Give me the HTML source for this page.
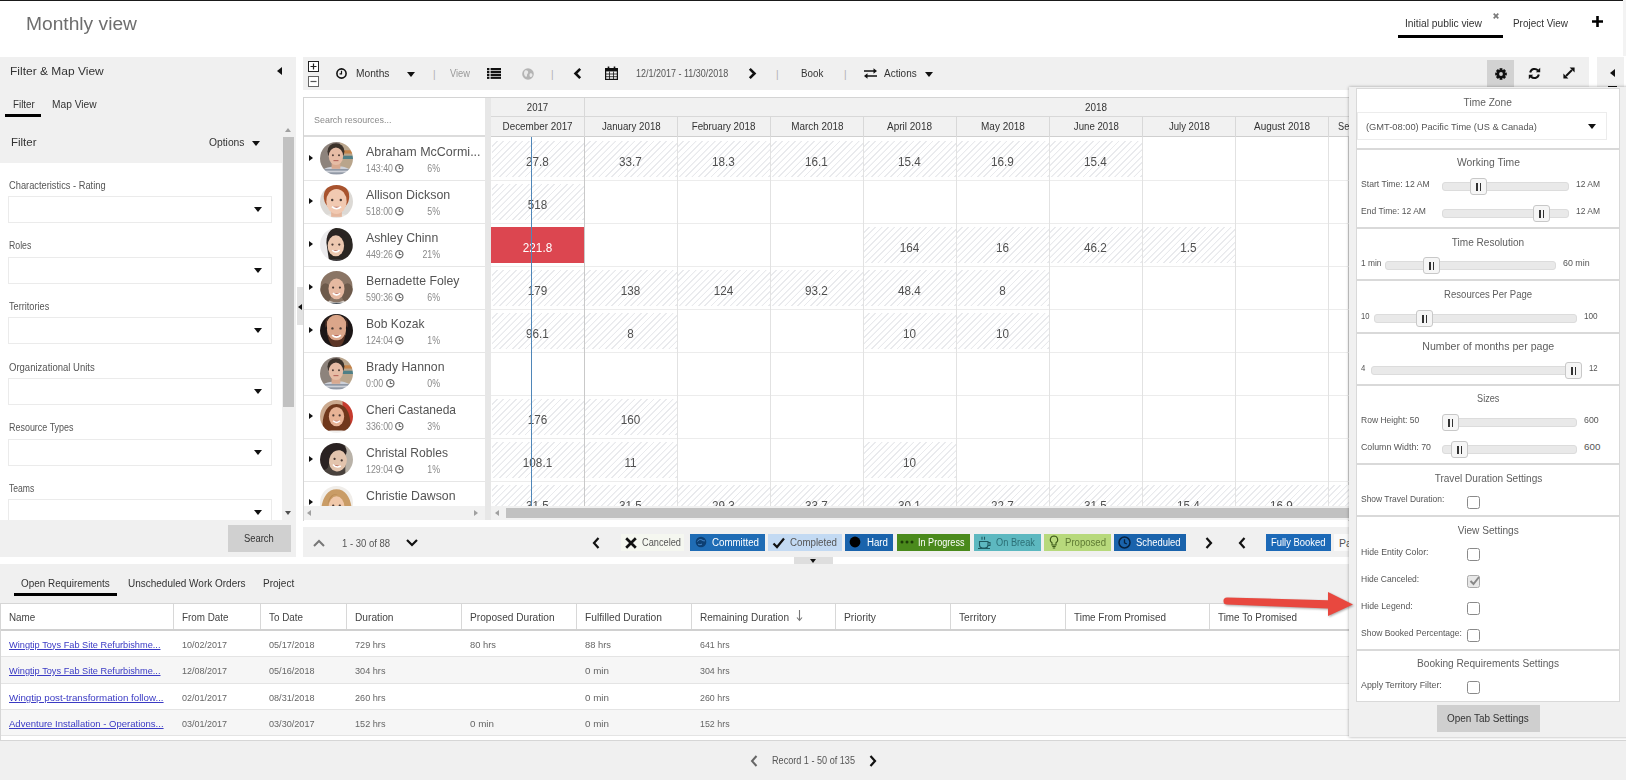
<!DOCTYPE html>
<html lang="en"><head><meta charset="utf-8"><title>Monthly view</title>
<style>
*{box-sizing:border-box;margin:0;padding:0}
html,body{width:1626px;height:780px;overflow:hidden;background:#fff}
body{font-family:"Liberation Sans",sans-serif;color:#444;position:relative;font-size:11px}
.a{position:absolute}
.t{position:absolute;white-space:nowrap;line-height:1}
svg{position:absolute;overflow:visible}
.g{background:#f0f0f0}
.dd{position:absolute;left:8px;width:264px;height:26px;background:#fff;border:1px solid #ebebeb}
.dd i{position:absolute;left:245px;top:10px;border:4.5px solid transparent;border-top:5px solid #111;border-bottom:0;width:0;height:0}
.lab{position:absolute;left:8.500px;font-size:10px;color:#555;white-space:nowrap;line-height:1}
.rn{position:absolute;left:365.500px;font-size:12.6px;color:#545454;white-space:nowrap;line-height:1}
.rs{position:absolute;font-size:10px;color:#8a8a8a;white-space:nowrap;line-height:1;transform:scaleX(.88);transform-origin:0 50%}
.av{position:absolute;left:320px;width:33px;height:33px;border-radius:50%;overflow:hidden}
.ex{position:absolute;left:308.9px;border:3.9px solid transparent;border-left:4.6px solid #111;border-right:0;width:0;height:0}
.hc{position:absolute;width:92px;height:36.5px;background:repeating-linear-gradient(135deg,#fff 0,#fff 3.1px,#e9eaed 3.3px,#e9eaed 4.3px,#fff 4.5px)}
.cv{position:absolute;width:93px;text-align:center;font-size:12.2px;transform:scaleX(.96);color:#505050;line-height:1;white-space:nowrap}
.mh{position:absolute;top:117px;height:20px;width:93px;text-align:center;font-size:10px;color:#333;line-height:19px;white-space:nowrap;border-left:1px solid #d8d8d8}
.lg{position:absolute;top:534px;height:17px;font-size:10.3px;line-height:17px;white-space:nowrap;color:#fff}
.th{position:absolute;top:604px;height:25px;line-height:27px;font-size:10.3px;color:#444;white-space:nowrap;border-left:1px solid #d8d8d8;padding-left:8px}
.td{position:absolute;font-size:9.8px;color:#666;white-space:nowrap;line-height:1}
.lk{color:#3a3ac4;text-decoration:underline}
.sec{position:absolute;left:1356px;width:264px;background:#fff;border:1px solid #d9d9d9}
.st{position:absolute;left:1356px;width:264px;text-align:center;font-size:10px;color:#5e5e5e;line-height:1;white-space:nowrap}
.sl{position:absolute;left:1361.5px;font-size:9.8px;color:#555;line-height:1;white-space:nowrap}
.tr{position:absolute;height:9px;background:#e9e9e9;border:1px solid #dcdcdc;border-radius:3px}
.tb{position:absolute;width:17px;height:17px;background:#f6f6f6;border:1px solid #c8c8c8;border-radius:3px}
.tb:before,.tb:after{content:"";position:absolute;top:4px;width:1.6px;height:8px;background:#333}
.tb:before{left:5.4px}.tb:after{left:8.6px}
.cb{position:absolute;left:1467px;width:13px;height:13px;background:#fff;border:1px solid #8a8a8a;border-radius:2.5px}
</style></head>
<body>
<div class="a" style="left:0;top:0;width:1623px;height:1px;background:#1a1a1a"></div>
<div class="a" style="left:1623px;top:0;width:3px;height:56px;background:#f3f3f3"></div>
<div class="t" id="title" style="display:inline-block;transform:scaleX(1.022);transform-origin:0 50%;left:26px;top:14.7px;font-size:18.8px;color:#6e6e6e">Monthly view</div>
<div class="t" id="tab1" style="display:inline-block;transform:scaleX(1.026);transform-origin:0 50%;left:1404.7px;top:18.8px;font-size:10px;color:#333">Initial public view</div>
<div class="a" style="left:1398px;top:35px;width:105px;height:3px;background:#000"></div>
<svg style="left:1493px;top:13px" width="6" height="6"><path d="M.7.7l4.600 4.600M5.300.7L.7 5.300" stroke="#7a7a7a" stroke-width="1.700"/></svg>
<div class="t" id="tab2" style="display:inline-block;transform:scaleX(0.993);transform-origin:0 50%;left:1513px;top:18.8px;font-size:10px;color:#333">Project View</div>
<svg style="left:1592px;top:16px" width="11" height="11"><path d="M5.5 0v11M0 5.5h11" stroke="#000" stroke-width="2.6" fill="none"/></svg>
<div class="a g" style="left:0;top:57px;width:296px;height:500px"></div>
<div class="t" id="fmv" style="display:inline-block;transform:scaleX(1.043);transform-origin:0 50%;left:10px;top:65.9px;font-size:11.5px;color:#333">Filter &amp; Map View</div>
<div class="a" style="left:277px;top:67px;border:4px solid transparent;border-right:5px solid #111;border-left:0"></div>
<div class="t" id="ftab" style="display:inline-block;transform:scaleX(0.978);transform-origin:0 50%;left:12.500px;top:99.8px;font-size:10px;color:#333">Filter</div>
<div class="a" style="left:5px;top:114px;width:36px;height:3px;background:#000"></div>
<div class="t" id="mtab" style="display:inline-block;transform:scaleX(1.018);transform-origin:0 50%;left:52px;top:99.8px;font-size:10px;color:#333">Map View</div>
<div class="t" id="fhd" style="display:inline-block;transform:scaleX(0.998);transform-origin:0 50%;left:10.500px;top:136.9px;font-size:11.5px;color:#333">Filter</div>
<div class="t" id="opt" style="display:inline-block;transform:scaleX(0.936);transform-origin:0 50%;left:209px;top:137.4px;font-size:11px;color:#333">Options</div>
<div class="a" style="left:252px;top:141px;border:4px solid transparent;border-top:5px solid #111;border-bottom:0"></div>
<div class="a" style="left:0;top:163px;width:282px;height:357px;background:#fff"></div>
<div class="a" style="left:282px;top:122px;width:13px;height:398px;background:#f0f0f0"></div>
<div class="a" style="left:282.6px;top:137px;width:11.2px;height:270px;background:#c1c1c1"></div>
<div class="a" style="left:285px;top:128px;border:3.5px solid transparent;border-bottom:4px solid #a0a0a0;border-top:0"></div>
<div class="a" style="left:285px;top:511px;border:3.5px solid transparent;border-top:4px solid #505050;border-bottom:0"></div>
<div class="lab" id="lab0" style="display:inline-block;transform:scaleX(0.929);transform-origin:0 50%;top:180.79999999999998px">Characteristics - Rating</div><div class="dd" style="top:196.2px;height:27px;"><i></i></div>
<div class="lab" id="lab1" style="display:inline-block;transform:scaleX(0.872);transform-origin:0 50%;top:241.4px">Roles</div><div class="dd" style="top:256.8px;height:27px;"><i></i></div>
<div class="lab" id="lab2" style="display:inline-block;transform:scaleX(0.916);transform-origin:0 50%;top:302.0px">Territories</div><div class="dd" style="top:317.4px;height:27px;"><i></i></div>
<div class="lab" id="lab3" style="display:inline-block;transform:scaleX(0.952);transform-origin:0 50%;top:362.6px">Organizational Units</div><div class="dd" style="top:378px;height:27px;"><i></i></div>
<div class="lab" id="lab4" style="display:inline-block;transform:scaleX(0.895);transform-origin:0 50%;top:423.20000000000005px">Resource Types</div><div class="dd" style="top:438.6px;height:27px;"><i></i></div>
<div class="lab" id="lab5" style="display:inline-block;transform:scaleX(0.859);transform-origin:0 50%;top:483.8px">Teams</div><div class="dd" style="top:499.2px;height:20.5px;border-bottom:0"><i></i></div>
<div class="a" style="left:228px;top:525px;width:63px;height:27px;background:#d0d0d0"></div>
<div class="t" id="srch" style="display:inline-block;transform:scaleX(0.94);transform-origin:0 50%;left:244px;top:534.4px;font-size:10px;color:#333">Search</div>
<div class="a" style="left:297px;top:287px;width:6px;height:38px;background:#e2e2e2"></div>
<div class="a" style="left:298px;top:304px;border:3.5px solid transparent;border-right:4px solid #111;border-left:0"></div>
<div class="a g" style="left:303px;top:57px;width:1286px;height:33px"></div>
<svg style="left:308px;top:61px" width="11" height="11"><rect x=".5" y=".5" width="10" height="10" fill="#fff" stroke="#222"/><path d="M5.5 2.5v6M2.5 5.5h6" stroke="#222" stroke-width="1.2"/></svg>
<svg style="left:308px;top:76px" width="11" height="11"><rect x=".5" y=".5" width="10" height="10" fill="#fff" stroke="#666"/><path d="M2.5 5.5h6" stroke="#555" stroke-width="1.2"/></svg>
<svg style="left:336px;top:68px" width="11" height="11"><circle cx="5.5" cy="5.5" r="4.6" fill="none" stroke="#111" stroke-width="1.6"/><path d="M5.5 2.8v3H3.6" stroke="#111" stroke-width="1.2" fill="none"/></svg>
<div class="t" id="months" style="display:inline-block;transform:scaleX(1.002);transform-origin:0 50%;left:355.500px;top:69.3px;font-size:10.2px;color:#333">Months</div>
<div class="a" style="left:407px;top:72px;border:4px solid transparent;border-top:5px solid #111;border-bottom:0"></div>
<div class="t" style="left:433px;top:70px;font-size:10px;color:#b0b0b0">|</div>
<div class="t" id="view" style="display:inline-block;transform:scaleX(0.913);transform-origin:0 50%;left:450px;top:69.3px;font-size:10.2px;color:#999">View</div>
<svg style="left:487px;top:68px" width="14" height="11"><g fill="#111"><rect x="0" y="0" width="2.4" height="2.2"/><rect x="3.6" y="0" width="10.4" height="2.2"/><rect x="0" y="2.9" width="2.4" height="2.2"/><rect x="3.6" y="2.9" width="10.4" height="2.2"/><rect x="0" y="5.8" width="2.4" height="2.2"/><rect x="3.6" y="5.8" width="10.4" height="2.2"/><rect x="0" y="8.7" width="2.4" height="2.2"/><rect x="3.6" y="8.7" width="10.4" height="2.2"/></g></svg>
<svg style="left:522px;top:68px" width="12" height="12"><circle cx="6" cy="6" r="5.8" fill="#b4b4b4"/><path d="M3 2.5c1.5-.8 3 0 3.2 1.5.2 1.6-1.5 2-1.2 3.5.2 1-.8 1.6-1.6 1C2 7.500 1.400 4 3 2.500zM8 5.500c1-.5 2.500.2 2.500 1.500S9 9.500 8.200 9c-.8-.6-1-2.800-.2-3.500z" fill="#e9e9e9"/></svg>
<div class="t" style="left:551px;top:70px;font-size:10px;color:#b0b0b0">|</div>
<svg style="left:573px;top:67px" width="9" height="13"><path d="M7.2 1.800L2.500 6.500l4.700 4.700" stroke="#111" stroke-width="2.600" fill="none"/></svg>
<svg style="left:605px;top:66px" width="13" height="14"><rect x=".6" y="2.600" width="11.800" height="10.800" fill="none" stroke="#111" stroke-width="1.200"/><rect x=".6" y="2.600" width="11.800" height="2.800" fill="#111"/><path d="M3.500 .5v3.500M9.500 .5v3.500" stroke="#111" stroke-width="1.600"/><path d="M4.500 5.500v8M8.500 5.500v8M.6 8h11.800M.6 10.700h11.800" stroke="#111" stroke-width=".8"/></svg>
<div class="t" id="range" style="display:inline-block;transform:scaleX(0.882);transform-origin:0 50%;left:635.700px;top:69.3px;font-size:10.2px;color:#555">12/1/2017 - 11/30/2018</div>
<svg style="left:748px;top:67px" width="9" height="13"><path d="M1.800 1.800l4.700 4.700-4.700 4.700" stroke="#111" stroke-width="2.600" fill="none"/></svg>
<div class="t" style="left:776px;top:70px;font-size:10px;color:#b0b0b0">|</div>
<div class="t" id="book" style="display:inline-block;transform:scaleX(0.96);transform-origin:0 50%;left:800.700px;top:69.3px;font-size:10.2px;color:#333">Book</div>
<div class="t" style="left:844px;top:70px;font-size:10px;color:#b0b0b0">|</div>
<svg style="left:864px;top:68px" width="13" height="11"><path d="M0 3h11M13 8H2" stroke="#111" stroke-width="1.500" fill="none"/><path d="M9.500 .3l3.500 2.700-3.500 2.700zM3.500 5.300L0 8l3.500 2.700z" fill="#111"/></svg>
<div class="t" id="actions" style="display:inline-block;transform:scaleX(0.978);transform-origin:0 50%;left:884px;top:69.3px;font-size:10.2px;color:#333">Actions</div>
<div class="a" style="left:925px;top:72px;border:4px solid transparent;border-top:5px solid #111;border-bottom:0"></div>
<div class="a" style="left:1487px;top:60px;width:27px;height:30px;background:#d2d2d2"></div>
<svg style="left:1495px;top:68px" width="12" height="12" viewBox="-6 -6 12 12"><g fill="#111"><rect x="-1.400" y="-5.800" width="2.800" height="3" transform="rotate(0)"/><rect x="-1.400" y="-5.800" width="2.800" height="3" transform="rotate(45)"/><rect x="-1.400" y="-5.800" width="2.800" height="3" transform="rotate(90)"/><rect x="-1.400" y="-5.800" width="2.800" height="3" transform="rotate(135)"/><rect x="-1.400" y="-5.800" width="2.800" height="3" transform="rotate(180)"/><rect x="-1.400" y="-5.800" width="2.800" height="3" transform="rotate(225)"/><rect x="-1.400" y="-5.800" width="2.800" height="3" transform="rotate(270)"/><rect x="-1.400" y="-5.800" width="2.800" height="3" transform="rotate(315)"/><circle r="4.300"/></g><circle r="1.900" fill="#d2d2d2"/></svg>
<svg style="left:1528px;top:67px" width="13" height="13" viewBox="0 0 13 13"><path d="M2.200 5.500A4.500 4.500 0 0 1 10 3.500M10.800 7.500A4.500 4.500 0 0 1 3 9.500" stroke="#111" stroke-width="2" fill="none"/><path d="M12.200 .8v4.400H7.800zM.8 12.200V7.800h4.400z" fill="#111"/></svg>
<svg style="left:1563px;top:67px" width="12" height="12" viewBox="0 0 12 12"><path d="M3 9l6-6" stroke="#111" stroke-width="2"/><path d="M11.600 .4v5L6.600 .4zM.4 11.600v-5l5 5z" fill="#111"/></svg>
<div class="a g" style="left:1597px;top:57px;width:27px;height:33px"></div>
<div class="a" style="left:1610px;top:69px;border:4.500px solid transparent;border-right:5px solid #111;border-left:0"></div>
<div class="a" style="left:1608px;top:86px;width:9px;height:2px;background:#111"></div>
<div class="a" style="left:303px;top:97px;width:1046px;height:424px;border:1px solid #d4d4d4;border-bottom:0;background:#fff"></div>
<div class="t" id="sres" style="display:inline-block;transform:scaleX(0.912);transform-origin:0 50%;left:313.500px;top:114.6px;font-size:9.8px;color:#8a8a8a">Search resources...</div>
<div class="a" style="left:304px;top:135px;width:181px;height:2px;background:#dcdcdc"></div>
<div class="a" style="left:485px;top:98px;width:6px;height:422px;background:#e7e7e7"></div>
<div class="a" style="left:491px;top:98px;width:858px;height:39px;background:#f1f1f1;border-bottom:1px solid #cfcfcf"></div>
<div class="a" style="left:491px;top:116px;width:858px;height:1px;background:#d8d8d8"></div>
<div class="a" style="left:584px;top:98px;width:1px;height:19px;background:#d8d8d8"></div>
<div class="t" id="y17" style="display:inline-block;transform:scaleX(0.966);transform-origin:50% 50%;left:491px;width:93px;text-align:center;top:102.7px;font-size:10px;color:#333">2017</div>
<div class="t" id="y18" style="display:inline-block;transform:scaleX(0.989);transform-origin:0 50%;left:1085px;top:102.7px;font-size:10px;color:#333">2018</div>
<div class="mh" style="left:491px;border-left:0;"><span id="m0" style="display:inline-block;transform:scaleX(0.984);transform-origin:50% 50%">December 2017</span></div><div class="mh" style="left:584px;"><span id="m1" style="display:inline-block;transform:scaleX(0.969);transform-origin:50% 50%">January 2018</span></div><div class="mh" style="left:677px;"><span id="m2" style="display:inline-block;transform:scaleX(0.979);transform-origin:50% 50%">February 2018</span></div><div class="mh" style="left:770px;"><span id="m3" style="display:inline-block;transform:scaleX(0.99);transform-origin:50% 50%">March 2018</span></div><div class="mh" style="left:863px;"><span id="m4" style="display:inline-block;transform:scaleX(0.999);transform-origin:50% 50%">April 2018</span></div><div class="mh" style="left:956px;"><span id="m5" style="display:inline-block;transform:scaleX(0.999);transform-origin:50% 50%">May 2018</span></div><div class="mh" style="left:1049px;"><span id="m6" style="display:inline-block;transform:scaleX(0.963);transform-origin:50% 50%">June 2018</span></div><div class="mh" style="left:1142px;"><span id="m7" style="display:inline-block;transform:scaleX(0.958);transform-origin:50% 50%">July 2018</span></div><div class="mh" style="left:1235px;"><span id="m8" style="display:inline-block;transform:scaleX(0.997);transform-origin:50% 50%">August 2018</span></div><div class="mh" style="left:1328px;width:30px;overflow:hidden;text-align:left;padding-left:9px"><span style="display:inline-block;transform:scaleX(.92);transform-origin:0 50%">September 2018</span></div>
<svg width="0" height="0" style="left:0;top:0"><defs><filter id="bl" x="-10%" y="-10%" width="120%" height="120%"><feGaussianBlur stdDeviation="0.55"/></filter></defs></svg>
<div class="a" style="left:0;top:0;width:1349px;height:506px;overflow:hidden">
<div class="a" style="left:304px;top:180px;width:181px;height:1px;background:#e6e6e6"></div><div class="a" style="left:491px;top:180px;width:858px;height:1px;background:#ececec"></div><div class="ex" style="top:155px"></div><div class="av" style="top:141.5px"><svg style="left:0;top:0" width="33" height="33" viewBox="0 0 34 34"><g filter="url(#bl)"><g transform="translate(17 17.5) scale(1.12) translate(-17 -17)"><rect width="34" height="34" fill="#8d837c"/><rect x="20" width="14" height="34" fill="#b9a58c"/><rect x="21" y="9" width="13" height="3" fill="#c4834a"/><rect x="21" y="14" width="13" height="3" fill="#4f7f86"/><path d="M1 34c1-7 5-9 13-10l8 0c6 1 10 4 11 10z" fill="#cdd0d8"/><path d="M3 30h28M5 27h24" stroke="#7d8594" stroke-width="1"/><rect x="12.500" y="19" width="8" height="7" fill="#d9a98f"/><ellipse cx="16.500" cy="10" rx="7.800" ry="7.500" fill="#3b302c"/><ellipse cx="16.5" cy="14.5" rx="6.6" ry="8" fill="#e6bca5"/><circle cx="13.7" cy="13.5" r="0.9" fill="#4a3a34"/><circle cx="19.3" cy="13.5" r="0.9" fill="#4a3a34"/><path d="M14.2 18.5h4.6" stroke="#b5655a" stroke-width="1"/></g></g></svg></div><div class="rn" id="rn0" style="display:inline-block;transform:scaleX(0.992);transform-origin:0 50%;top:146px">Abraham McCormi...</div><div class="rs" id="rh0" style="left:365.5px;top:164.2px">143:40</div><svg style="left:394.6px;top:163.5px" width="8.600" height="8.600" viewBox="0 0 8 8"><circle cx="4" cy="4" r="3.400" fill="none" stroke="#6a6a6a" stroke-width="1.100"/><path d="M4 1.800V4.200H6" stroke="#6a6a6a" stroke-width="1" fill="none"/></svg><div class="rs" id="rp0" style="left:400px;width:40px;text-align:right;transform-origin:100% 50%;top:164.2px">6%</div>
<div class="hc" style="left:492px;top:140.5px"></div><div class="cv" style="left:491px;top:155.5px">27.8</div><div class="hc" style="left:585px;top:140.5px"></div><div class="cv" style="left:584px;top:155.5px">33.7</div><div class="hc" style="left:678px;top:140.5px"></div><div class="cv" style="left:677px;top:155.5px">18.3</div><div class="hc" style="left:771px;top:140.5px"></div><div class="cv" style="left:770px;top:155.5px">16.1</div><div class="hc" style="left:864px;top:140.5px"></div><div class="cv" style="left:863px;top:155.5px">15.4</div><div class="hc" style="left:957px;top:140.5px"></div><div class="cv" style="left:956px;top:155.5px">16.9</div><div class="hc" style="left:1050px;top:140.5px"></div><div class="cv" style="left:1049px;top:155.5px">15.4</div>
<div class="a" style="left:304px;top:223px;width:181px;height:1px;background:#e6e6e6"></div><div class="a" style="left:491px;top:223px;width:858px;height:1px;background:#ececec"></div><div class="ex" style="top:198px"></div><div class="av" style="top:184.5px"><svg style="left:0;top:0" width="33" height="33" viewBox="0 0 34 34"><g filter="url(#bl)"><g transform="translate(17 19) scale(1.38) translate(-17 -17)"><rect width="34" height="34" fill="#dcd9d5"/><path d="M0 34c2-6 6-8 12-9h10c6 1 10 3 12 9z" fill="#e9e6e2"/><rect x="13" y="22" width="8" height="5" fill="#e5b79d"/><ellipse cx="17" cy="12" rx="9.500" ry="10" fill="#a8532d"/><ellipse cx="17" cy="15.5" rx="7.6" ry="9.3" fill="#f1c9b1"/><circle cx="13.8" cy="14.4" r="0.9" fill="#4a3a34"/><circle cx="20.2" cy="14.4" r="0.9" fill="#4a3a34"/><path d="M13.6 19.4q3.4 3.0 6.8 0" stroke="#fff" stroke-width="1.300" fill="#b5655a"/></g></g></svg></div><div class="rn" id="rn1" style="display:inline-block;transform:scaleX(0.987);transform-origin:0 50%;top:189px">Allison Dickson</div><div class="rs" id="rh1" style="left:365.5px;top:207.2px">518:00</div><svg style="left:394.6px;top:206.5px" width="8.600" height="8.600" viewBox="0 0 8 8"><circle cx="4" cy="4" r="3.400" fill="none" stroke="#6a6a6a" stroke-width="1.100"/><path d="M4 1.800V4.200H6" stroke="#6a6a6a" stroke-width="1" fill="none"/></svg><div class="rs" id="rp1" style="left:400px;width:40px;text-align:right;transform-origin:100% 50%;top:207.2px">5%</div>
<div class="hc" style="left:492px;top:183.5px"></div><div class="cv" style="left:491px;top:198.5px">518</div>
<div class="a" style="left:304px;top:266px;width:181px;height:1px;background:#e6e6e6"></div><div class="a" style="left:491px;top:266px;width:858px;height:1px;background:#ececec"></div><div class="ex" style="top:241px"></div><div class="av" style="top:227.5px"><svg style="left:0;top:0" width="33" height="33" viewBox="0 0 34 34"><g filter="url(#bl)"><g transform="translate(17 19) scale(1.3) translate(-17 -17)"><rect width="34" height="34" fill="#ecebed"/><path d="M9 14c0-9 5-12 10-12 8 0 11 7 11 16l1 16H20l-9-6z" fill="#2c2523"/><path d="M4 34c2-5 6-7 11-7h6l6 7z" fill="#3d3a3c"/><ellipse cx="16.5" cy="16.5" rx="6.5" ry="8.3" fill="#ecc8b0"/><circle cx="13.8" cy="15.5" r="0.9" fill="#4a3a34"/><circle cx="19.2" cy="15.5" r="0.9" fill="#4a3a34"/><path d="M13.6 20.0q2.9 2.7 5.9 0" stroke="#fff" stroke-width="1.300" fill="#b5655a"/><path d="M9.500 13c2-6 8-7 14-4-3-5-12-6-14 4z" fill="#2c2523"/></g></g></svg></div><div class="rn" id="rn2" style="display:inline-block;transform:scaleX(0.973);transform-origin:0 50%;top:232px">Ashley Chinn</div><div class="rs" id="rh2" style="left:365.5px;top:250.2px">449:26</div><svg style="left:394.6px;top:249.5px" width="8.600" height="8.600" viewBox="0 0 8 8"><circle cx="4" cy="4" r="3.400" fill="none" stroke="#6a6a6a" stroke-width="1.100"/><path d="M4 1.800V4.200H6" stroke="#6a6a6a" stroke-width="1" fill="none"/></svg><div class="rs" id="rp2" style="left:400px;width:40px;text-align:right;transform-origin:100% 50%;top:250.2px">21%</div>
<div class="a" style="left:491px;top:227px;width:93px;height:36px;background:#dc4650"></div><div class="cv" style="left:491px;top:241.5px;color:#fff">221.8</div><div class="hc" style="left:864px;top:226.5px"></div><div class="cv" style="left:863px;top:241.5px">164</div><div class="hc" style="left:957px;top:226.5px"></div><div class="cv" style="left:956px;top:241.5px">16</div><div class="hc" style="left:1050px;top:226.5px"></div><div class="cv" style="left:1049px;top:241.5px">46.2</div><div class="hc" style="left:1143px;top:226.5px"></div><div class="cv" style="left:1142px;top:241.5px">1.5</div>
<div class="a" style="left:304px;top:309px;width:181px;height:1px;background:#e6e6e6"></div><div class="a" style="left:491px;top:309px;width:858px;height:1px;background:#ececec"></div><div class="ex" style="top:284px"></div><div class="av" style="top:270.5px"><svg style="left:0;top:0" width="33" height="33" viewBox="0 0 34 34"><g filter="url(#bl)"><g transform="translate(17 19) scale(1.25) translate(-17 -17)"><rect width="34" height="34" fill="#d3cdc6"/><ellipse cx="17" cy="14" rx="13" ry="13.500" fill="#8a7565"/><ellipse cx="8" cy="20" rx="5" ry="8" fill="#6d5a4c"/><ellipse cx="26" cy="20" rx="5" ry="8" fill="#6d5a4c"/><path d="M2 34c2-5 7-6 11-6h8c5 0 9 2 11 6z" fill="#48525c"/><ellipse cx="17" cy="16.5" rx="6.6" ry="8.5" fill="#e6b9a1"/><circle cx="14.2" cy="15.5" r="0.9" fill="#4a3a34"/><circle cx="19.8" cy="15.5" r="0.9" fill="#4a3a34"/><path d="M14.0 20.1q3.0 2.7 5.9 0" stroke="#fff" stroke-width="1.300" fill="#b5655a"/></g></g></svg></div><div class="rn" id="rn3" style="display:inline-block;transform:scaleX(0.975);transform-origin:0 50%;top:275px">Bernadette Foley</div><div class="rs" id="rh3" style="left:365.5px;top:293.2px">590:36</div><svg style="left:394.6px;top:292.5px" width="8.600" height="8.600" viewBox="0 0 8 8"><circle cx="4" cy="4" r="3.400" fill="none" stroke="#6a6a6a" stroke-width="1.100"/><path d="M4 1.800V4.200H6" stroke="#6a6a6a" stroke-width="1" fill="none"/></svg><div class="rs" id="rp3" style="left:400px;width:40px;text-align:right;transform-origin:100% 50%;top:293.2px">6%</div>
<div class="hc" style="left:492px;top:269.5px"></div><div class="cv" style="left:491px;top:284.5px">179</div><div class="hc" style="left:585px;top:269.5px"></div><div class="cv" style="left:584px;top:284.5px">138</div><div class="hc" style="left:678px;top:269.5px"></div><div class="cv" style="left:677px;top:284.5px">124</div><div class="hc" style="left:771px;top:269.5px"></div><div class="cv" style="left:770px;top:284.5px">93.2</div><div class="hc" style="left:864px;top:269.5px"></div><div class="cv" style="left:863px;top:284.5px">48.4</div><div class="hc" style="left:957px;top:269.5px"></div><div class="cv" style="left:956px;top:284.5px">8</div>
<div class="a" style="left:304px;top:352px;width:181px;height:1px;background:#e6e6e6"></div><div class="a" style="left:491px;top:352px;width:858px;height:1px;background:#ececec"></div><div class="ex" style="top:327px"></div><div class="av" style="top:313.5px"><svg style="left:0;top:0" width="33" height="33" viewBox="0 0 34 34"><g filter="url(#bl)"><g transform="translate(17 19) scale(1.35) translate(-17 -17)"><rect width="34" height="34" fill="#1d1918"/><path d="M0 34c2-5 6-7 11-7h12c5 0 9 2 11 7z" fill="#262222"/><ellipse cx="17" cy="11" rx="7.600" ry="7.500" fill="#d9a487"/><path d="M9.500 12c0-3 .5-5 1.500-6.500-2 1-3 4-2.500 8zM24.500 12c0-3-.5-5-1.500-6.500 2 1 3 4 2.500 8z" fill="#4a2e24"/><ellipse cx="17" cy="15" rx="7.3" ry="9.5" fill="#dba68a"/><circle cx="13.9" cy="13.9" r="0.9" fill="#4a3a34"/><circle cx="20.1" cy="13.9" r="0.9" fill="#4a3a34"/><path d="M13.7 19.0q3.3 3.0 6.6 0" stroke="#fff" stroke-width="1.300" fill="#b5655a"/><path d="M10 17c1 9 4 11 7 11s6-2 7-11c-2 5-4 6-7 6s-5-1-7-6z" fill="#5b3525"/></g></g></svg></div><div class="rn" id="rn4" style="display:inline-block;transform:scaleX(0.96);transform-origin:0 50%;top:318px">Bob Kozak</div><div class="rs" id="rh4" style="left:365.5px;top:336.2px">124:04</div><svg style="left:394.6px;top:335.5px" width="8.600" height="8.600" viewBox="0 0 8 8"><circle cx="4" cy="4" r="3.400" fill="none" stroke="#6a6a6a" stroke-width="1.100"/><path d="M4 1.800V4.200H6" stroke="#6a6a6a" stroke-width="1" fill="none"/></svg><div class="rs" id="rp4" style="left:400px;width:40px;text-align:right;transform-origin:100% 50%;top:336.2px">1%</div>
<div class="hc" style="left:492px;top:312.5px"></div><div class="cv" style="left:491px;top:327.5px">96.1</div><div class="hc" style="left:585px;top:312.5px"></div><div class="cv" style="left:584px;top:327.5px">8</div><div class="hc" style="left:864px;top:312.5px"></div><div class="cv" style="left:863px;top:327.5px">10</div><div class="hc" style="left:957px;top:312.5px"></div><div class="cv" style="left:956px;top:327.5px">10</div>
<div class="a" style="left:304px;top:395px;width:181px;height:1px;background:#e6e6e6"></div><div class="a" style="left:491px;top:395px;width:858px;height:1px;background:#ececec"></div><div class="av" style="top:356.5px"><svg style="left:0;top:0" width="33" height="33" viewBox="0 0 34 34"><g filter="url(#bl)"><g transform="translate(17 17.5) scale(1.12) translate(-17 -17)"><rect width="34" height="34" fill="#8d837c"/><rect x="20" width="14" height="34" fill="#b9a58c"/><rect x="21" y="9" width="13" height="3" fill="#c4834a"/><rect x="21" y="14" width="13" height="3" fill="#4f7f86"/><path d="M1 34c1-7 5-9 13-10l8 0c6 1 10 4 11 10z" fill="#cdd0d8"/><path d="M3 30h28M5 27h24" stroke="#7d8594" stroke-width="1"/><rect x="12.500" y="19" width="8" height="7" fill="#d9a98f"/><ellipse cx="16.500" cy="10" rx="7.800" ry="7.500" fill="#3b302c"/><ellipse cx="16.5" cy="14.5" rx="6.6" ry="8" fill="#e6bca5"/><circle cx="13.7" cy="13.5" r="0.9" fill="#4a3a34"/><circle cx="19.3" cy="13.5" r="0.9" fill="#4a3a34"/><path d="M14.2 18.5h4.6" stroke="#b5655a" stroke-width="1"/></g></g></svg></div><div class="rn" id="rn5" style="display:inline-block;transform:scaleX(0.975);transform-origin:0 50%;top:361px">Brady Hannon</div><div class="rs" id="rh5" style="left:365.5px;top:379.2px">0:00</div><svg style="left:386.3px;top:378.5px" width="8.600" height="8.600" viewBox="0 0 8 8"><circle cx="4" cy="4" r="3.400" fill="none" stroke="#6a6a6a" stroke-width="1.100"/><path d="M4 1.800V4.200H6" stroke="#6a6a6a" stroke-width="1" fill="none"/></svg><div class="rs" id="rp5" style="left:400px;width:40px;text-align:right;transform-origin:100% 50%;top:379.2px">0%</div>

<div class="a" style="left:304px;top:438px;width:181px;height:1px;background:#e6e6e6"></div><div class="a" style="left:491px;top:438px;width:858px;height:1px;background:#ececec"></div><div class="ex" style="top:413px"></div><div class="av" style="top:399.5px"><svg style="left:0;top:0" width="33" height="33" viewBox="0 0 34 34"><g filter="url(#bl)"><g transform="translate(17 19) scale(1.25) translate(-17 -17)"><rect width="34" height="34" fill="#cba98e"/><rect x="22" width="12" height="34" fill="#c63a2e"/><path d="M6 30c-2-14 2-25 11-25s13 10 11 25z" fill="#70381f"/><path d="M3 34c2-5 6-7 10-7h8c5 0 9 2 10 7z" fill="#f2f0ee"/><ellipse cx="17" cy="15.5" rx="6.3" ry="8" fill="#e8b395"/><circle cx="14.4" cy="14.5" r="0.9" fill="#4a3a34"/><circle cx="19.6" cy="14.5" r="0.9" fill="#4a3a34"/><path d="M14.2 18.9q2.8 2.6 5.7 0" stroke="#fff" stroke-width="1.300" fill="#b5655a"/></g></g></svg></div><div class="rn" id="rn6" style="display:inline-block;transform:scaleX(0.952);transform-origin:0 50%;top:404px">Cheri Castaneda</div><div class="rs" id="rh6" style="left:365.5px;top:422.2px">336:00</div><svg style="left:394.6px;top:421.5px" width="8.600" height="8.600" viewBox="0 0 8 8"><circle cx="4" cy="4" r="3.400" fill="none" stroke="#6a6a6a" stroke-width="1.100"/><path d="M4 1.800V4.200H6" stroke="#6a6a6a" stroke-width="1" fill="none"/></svg><div class="rs" id="rp6" style="left:400px;width:40px;text-align:right;transform-origin:100% 50%;top:422.2px">3%</div>
<div class="hc" style="left:492px;top:398.5px"></div><div class="cv" style="left:491px;top:413.5px">176</div><div class="hc" style="left:585px;top:398.5px"></div><div class="cv" style="left:584px;top:413.5px">160</div>
<div class="a" style="left:304px;top:481px;width:181px;height:1px;background:#e6e6e6"></div><div class="a" style="left:491px;top:481px;width:858px;height:1px;background:#ececec"></div><div class="ex" style="top:456px"></div><div class="av" style="top:442.5px"><svg style="left:0;top:0" width="33" height="33" viewBox="0 0 34 34"><g filter="url(#bl)"><g transform="translate(17 19) scale(1.3) translate(-17 -17)"><rect width="34" height="34" fill="#4a433d"/><rect x="24" width="10" height="34" fill="#b9b2a8"/><ellipse cx="15" cy="9" rx="10" ry="7.500" fill="#2a2320"/><ellipse cx="7" cy="16" rx="4.500" ry="8" fill="#2a2320"/><path d="M4 34c2-5 6-6 10-6h8c5 0 8 2 9 6z" fill="#8b8784"/><g transform="rotate(12 18 17)"><ellipse cx="18" cy="16.5" rx="7" ry="8.5" fill="#e3c4ad"/><circle cx="15.1" cy="15.5" r="0.9" fill="#4a3a34"/><circle cx="20.9" cy="15.5" r="0.9" fill="#4a3a34"/><path d="M14.8 20.1q3.1 2.7 6.3 0" stroke="#fff" stroke-width="1.300" fill="#b5655a"/></g></g></g></svg></div><div class="rn" id="rn7" style="display:inline-block;transform:scaleX(0.96);transform-origin:0 50%;top:447px">Christal Robles</div><div class="rs" id="rh7" style="left:365.5px;top:465.2px">129:04</div><svg style="left:394.6px;top:464.5px" width="8.600" height="8.600" viewBox="0 0 8 8"><circle cx="4" cy="4" r="3.400" fill="none" stroke="#6a6a6a" stroke-width="1.100"/><path d="M4 1.800V4.200H6" stroke="#6a6a6a" stroke-width="1" fill="none"/></svg><div class="rs" id="rp7" style="left:400px;width:40px;text-align:right;transform-origin:100% 50%;top:465.2px">1%</div>
<div class="hc" style="left:492px;top:441.5px"></div><div class="cv" style="left:491px;top:456.5px">108.1</div><div class="hc" style="left:585px;top:441.5px"></div><div class="cv" style="left:584px;top:456.5px">11</div><div class="hc" style="left:864px;top:441.5px"></div><div class="cv" style="left:863px;top:456.5px">10</div>
<div class="a" style="left:304px;top:524px;width:181px;height:1px;background:#e6e6e6"></div><div class="a" style="left:491px;top:524px;width:858px;height:1px;background:#ececec"></div><div class="ex" style="top:499px"></div><div class="av" style="top:485.5px"><svg style="left:0;top:0" width="33" height="33" viewBox="0 0 34 34"><g filter="url(#bl)"><g transform="translate(17 19) scale(1.3) translate(-17 -17)"><rect width="34" height="34" fill="#f0ede9"/><path d="M5 34C3 18 7 5 17 5s14 13 12 29z" fill="#c99c66"/><ellipse cx="17" cy="19" rx="6.3" ry="8.5" fill="#f0c8aa"/><circle cx="14.4" cy="18.0" r="0.9" fill="#4a3a34"/><circle cx="19.6" cy="18.0" r="0.9" fill="#4a3a34"/><path d="M14.2 22.6q2.8 2.7 5.7 0" stroke="#fff" stroke-width="1.300" fill="#b5655a"/><path d="M10 17c1-6 4-9 8-8-5 0-6 4-8 8z" fill="#b98a55"/></g></g></svg></div><div class="rn" id="rn8" style="display:inline-block;transform:scaleX(0.976);transform-origin:0 50%;top:490px">Christie Dawson</div>
<div class="hc" style="left:492px;top:484.5px"></div><div class="cv" style="left:491px;top:499.5px">31.5</div><div class="hc" style="left:585px;top:484.5px"></div><div class="cv" style="left:584px;top:499.5px">31.5</div><div class="hc" style="left:678px;top:484.5px"></div><div class="cv" style="left:677px;top:499.5px">29.3</div><div class="hc" style="left:771px;top:484.5px"></div><div class="cv" style="left:770px;top:499.5px">33.7</div><div class="hc" style="left:864px;top:484.5px"></div><div class="cv" style="left:863px;top:499.5px">30.1</div><div class="hc" style="left:957px;top:484.5px"></div><div class="cv" style="left:956px;top:499.5px">22.7</div><div class="hc" style="left:1050px;top:484.5px"></div><div class="cv" style="left:1049px;top:499.5px">31.5</div><div class="hc" style="left:1143px;top:484.5px"></div><div class="cv" style="left:1142px;top:499.5px">15.4</div><div class="hc" style="left:1236px;top:484.5px"></div><div class="cv" style="left:1235px;top:499.5px">16.9</div><div class="hc" style="left:1329px;top:484.5px"></div><div class="cv" style="left:1328px;top:499.5px">8</div>
<div class="a" style="left:584px;top:137px;width:1px;height:371px;background:#c9c9c9"></div><div class="a" style="left:677px;top:137px;width:1px;height:371px;background:#e2e2e2"></div><div class="a" style="left:770px;top:137px;width:1px;height:371px;background:#e2e2e2"></div><div class="a" style="left:863px;top:137px;width:1px;height:371px;background:#e2e2e2"></div><div class="a" style="left:956px;top:137px;width:1px;height:371px;background:#e2e2e2"></div><div class="a" style="left:1049px;top:137px;width:1px;height:371px;background:#e2e2e2"></div><div class="a" style="left:1142px;top:137px;width:1px;height:371px;background:#e2e2e2"></div><div class="a" style="left:1235px;top:137px;width:1px;height:371px;background:#e2e2e2"></div><div class="a" style="left:1328px;top:137px;width:1px;height:371px;background:#e2e2e2"></div><div class="a" style="left:531px;top:137px;width:1px;height:371px;background:#4f86b8"></div>
</div>
<div class="a" style="left:304px;top:506px;width:181px;height:14px;background:#f1f1f1"></div><div class="a" style="left:307px;top:510px;border:3px solid transparent;border-right:4px solid #a0a0a0;border-left:0"></div><div class="a" style="left:474px;top:510px;border:3px solid transparent;border-left:4px solid #a0a0a0;border-right:0"></div><div class="a" style="left:491px;top:506px;width:858px;height:14px;background:#f1f1f1"></div><div class="a" style="left:495px;top:510px;border:3px solid transparent;border-right:4px solid #a0a0a0;border-left:0"></div><div class="a" style="left:506px;top:508px;width:843px;height:10px;background:#c1c1c1"></div>
<div class="a g" style="left:303px;top:527px;width:1046px;height:30px"></div>
<svg style="left:313px;top:539px" width="12" height="8"><path d="M1 7l5-5 5 5" stroke="#777" stroke-width="2" fill="none"/></svg>
<div class="t" id="pg" style="display:inline-block;transform:scaleX(0.951);transform-origin:0 50%;left:341.500px;top:538.6px;font-size:10px;color:#555">1 - 30 of 88</div>
<svg style="left:406px;top:539px" width="12" height="8"><path d="M1 1l5 5 5-5" stroke="#111" stroke-width="2.200" fill="none"/></svg>
<svg style="left:592px;top:537px" width="8" height="12"><path d="M6.500 1L2 6l4.500 5" stroke="#111" stroke-width="2.200" fill="none"/></svg>
<div class="lg" style="left:621px;width:63px;background:#f5f7f0"></div><svg style="left:624.500px;top:536.500px" width="12" height="12"><path d="M1.200 1.200l9.600 9.600M10.800 1.200l-9.600 9.600" stroke="#111" stroke-width="2.700"/></svg><div class="t" id="l0" style="display:inline-block;transform:scaleX(0.923);transform-origin:0 50%;left:642px;top:537.9px;font-size:10px;color:#555">Canceled</div>
<div class="lg" style="left:690px;width:75px;background:#1f6cb5"></div><svg style="left:695px;top:536px" width="12" height="12"><circle cx="6" cy="6" r="5.300" fill="#0d3f73"/><path d="M2.500 5.500c1-2 3-2.500 4.500-1.500s2.500 1 3 .5M3 8c1 .8 2.500 1 4 0" stroke="#4d8fd0" stroke-width=".9" fill="none"/></svg><div class="t" id="l1" style="display:inline-block;transform:scaleX(0.972);transform-origin:0 50%;left:712px;top:537.9px;font-size:10px;color:#fff">Committed</div>
<div class="lg" style="left:768px;width:74px;background:#c3daf3"></div><svg style="left:772px;top:537px" width="14" height="12"><path d="M1.500 6.500l3.500 3.500 7-8.500" stroke="#111" stroke-width="2.200" fill="none"/></svg><div class="t" id="l2" style="display:inline-block;transform:scaleX(0.972);transform-origin:0 50%;left:790px;top:537.9px;font-size:10px;color:#555">Completed</div>
<div class="lg" style="left:845px;width:48px;background:#1a63ac"></div><svg style="left:849px;top:536px" width="12" height="12"><circle cx="6" cy="6" r="5.400" fill="#000"/></svg><div class="t" id="l3" style="display:inline-block;transform:scaleX(0.968);transform-origin:0 50%;left:867px;top:537.9px;font-size:10px;color:#fff">Hard</div>
<div class="lg" style="left:897px;width:73px;background:#4a8a1c"></div><svg style="left:900px;top:540px" width="16" height="4"><circle cx="2" cy="2" r="1.500" fill="#1d3d08"/><circle cx="7" cy="2" r="1.500" fill="#1d3d08"/><circle cx="12" cy="2" r="1.500" fill="#1d3d08"/></svg><div class="t" id="l4" style="display:inline-block;transform:scaleX(0.909);transform-origin:0 50%;left:918px;top:537.9px;font-size:10px;color:#fff">In Progress</div>
<div class="lg" style="left:974px;width:67px;background:#5db8c0"></div><svg style="left:978px;top:536px" width="14" height="13"><path d="M1.500 5.500h8.500v3.500a3 3 0 0 1-3 3h-2.500a3 3 0 0 1-3-3zM10 6.500h2v3h-2.500M0 12.500h12M4 .8v3M6.500 .8v3" stroke="#1f5a60" stroke-width="1.100" fill="none"/></svg><div class="t" id="l5" style="display:inline-block;transform:scaleX(0.923);transform-origin:0 50%;left:996px;top:537.9px;font-size:10px;color:#2c6f76">On Break</div>
<div class="lg" style="left:1044px;width:67px;background:#b7d97c"></div><svg style="left:1049px;top:535px" width="10" height="14"><path d="M5 1a3.700 3.700 0 0 0-2 6.800V10h4V7.800A3.700 3.700 0 0 0 5 1zM3.300 11.500h3.400M3.800 13h2.400" stroke="#3d5a18" stroke-width="1.100" fill="none"/></svg><div class="t" id="l6" style="display:inline-block;transform:scaleX(0.958);transform-origin:0 50%;left:1065px;top:537.9px;font-size:10px;color:#5e7a33">Proposed</div>
<div class="lg" style="left:1114px;width:72px;background:#1a63ac"></div><svg style="left:1118px;top:536px" width="13" height="13"><circle cx="6.500" cy="6.500" r="5.500" fill="none" stroke="#06213f" stroke-width="1.500"/><path d="M6.500 3.200v3.600l2.300 1.200" stroke="#06213f" stroke-width="1.300" fill="none"/></svg><div class="t" id="l7" style="display:inline-block;transform:scaleX(0.941);transform-origin:0 50%;left:1136px;top:537.9px;font-size:10px;color:#fff">Scheduled</div>
<svg style="left:1205px;top:537px" width="8" height="12"><path d="M1.500 1L6 6l-4.500 5" stroke="#111" stroke-width="2.200" fill="none"/></svg>
<svg style="left:1238px;top:537px" width="8" height="12"><path d="M6.500 1L2 6l4.500 5" stroke="#111" stroke-width="2.200" fill="none"/></svg>
<div class="lg" style="left:1266px;width:65px;background:#1c69b7"></div><div class="t" id="fb" style="display:inline-block;transform:scaleX(0.943);transform-origin:0 50%;left:1271px;top:537.9px;font-size:10px;color:#fff">Fully Booked</div>
<div class="lg" style="left:1334px;width:15px;background:#fafafa"></div><div class="t" style="left:1339px;top:538px;font-size:10.500px;color:#555;width:10px;overflow:hidden">Pa</div>
<div class="a" style="left:794px;top:557px;width:39px;height:7px;background:#dedede"></div><div class="a" style="left:810px;top:559px;border:3.500px solid transparent;border-top:4px solid #111;border-bottom:0"></div>
<div class="a g" style="left:0;top:564px;width:1626px;height:216px"></div>
<div class="t" id="bt0" style="display:inline-block;transform:scaleX(0.992);transform-origin:0 50%;left:20.500px;top:578.6px;font-size:10px;color:#333">Open Requirements</div><div class="a" style="left:14px;top:593px;width:103px;height:3px;background:#000"></div><div class="t" id="bt1" style="display:inline-block;transform:scaleX(0.999);transform-origin:0 50%;left:127.500px;top:578.6px;font-size:10px;color:#333">Unscheduled Work Orders</div><div class="t" id="bt2" style="display:inline-block;transform:scaleX(1.004);transform-origin:0 50%;left:262.500px;top:578.6px;font-size:10px;color:#333">Project</div>
<div class="a" style="left:0;top:603px;width:1626px;height:138px;background:#fff;border:1px solid #d6d6d6;border-right:0"></div>
<div class="a" style="left:1px;top:629px;width:1625px;height:2px;background:#d0d0d0"></div>
<div class="th" style="left:0px;border-left:0;padding-left:9px;"><span id="th0" style="display:inline-block;transform:scaleX(0.956);transform-origin:0 50%">Name</span></div><div class="th" style="left:173px;"><span id="th1" style="display:inline-block;transform:scaleX(0.956);transform-origin:0 50%">From Date</span></div><div class="th" style="left:260px;"><span id="th2" style="display:inline-block;transform:scaleX(0.958);transform-origin:0 50%">To Date</span></div><div class="th" style="left:346px;"><span id="th3" style="display:inline-block;transform:scaleX(0.989);transform-origin:0 50%">Duration</span></div><div class="th" style="left:461px;"><span id="th4" style="display:inline-block;transform:scaleX(0.985);transform-origin:0 50%">Proposed Duration</span></div><div class="th" style="left:576px;"><span id="th5" style="display:inline-block;transform:scaleX(0.997);transform-origin:0 50%">Fulfilled Duration</span></div><div class="th" style="left:691px;"><span id="th6" style="display:inline-block;transform:scaleX(0.978);transform-origin:0 50%">Remaining Duration</span></div><div class="th" style="left:835px;"><span id="th7" style="display:inline-block;transform:scaleX(0.999);transform-origin:0 50%">Priority</span></div><div class="th" style="left:950px;"><span id="th8" style="display:inline-block;transform:scaleX(0.995);transform-origin:0 50%">Territory</span></div><div class="th" style="left:1065px;"><span id="th9" style="display:inline-block;transform:scaleX(0.961);transform-origin:0 50%">Time From Promised</span></div><div class="th" style="left:1209px;"><span id="th10" style="display:inline-block;transform:scaleX(0.959);transform-origin:0 50%">Time To Promised</span></div>
<svg style="left:796px;top:610px" width="7" height="12"><path d="M3.500 0v10M1 7.500l2.500 3 2.500-3" stroke="#777" stroke-width="1.100" fill="none"/></svg>
<div class="a" style="left:1px;top:631px;width:1625px;height:26px;background:#fff;border-bottom:1px solid #e4e4e4"></div><div class="td lk" id="c0_0" style="display:inline-block;transform:scaleX(0.941);transform-origin:0 50%;left:9px;top:639.8px">Wingtip Toys Fab Site Refurbishme...</div><div class="td" id="c0_1" style="display:inline-block;transform:scaleX(0.917);transform-origin:0 50%;left:182px;top:639.8px">10/02/2017</div><div class="td" id="c0_2" style="display:inline-block;transform:scaleX(0.928);transform-origin:0 50%;left:269px;top:639.8px">05/17/2018</div><div class="td" id="c0_3" style="display:inline-block;transform:scaleX(0.933);transform-origin:0 50%;left:355px;top:639.8px">729 hrs</div><div class="td" id="c0_4" style="display:inline-block;transform:scaleX(0.955);transform-origin:0 50%;left:470px;top:639.8px">80 hrs</div><div class="td" id="c0_5" style="display:inline-block;transform:scaleX(0.955);transform-origin:0 50%;left:585px;top:639.8px">88 hrs</div><div class="td" id="c0_6" style="display:inline-block;transform:scaleX(0.906);transform-origin:0 50%;left:700px;top:639.8px">641 hrs</div>
<div class="a" style="left:1px;top:657px;width:1625px;height:26.5px;background:#f6f6f6;border-bottom:1px solid #e4e4e4"></div><div class="td lk" id="c1_0" style="display:inline-block;transform:scaleX(0.941);transform-origin:0 50%;left:9px;top:666.05px">Wingtip Toys Fab Site Refurbishme...</div><div class="td" id="c1_1" style="display:inline-block;transform:scaleX(0.917);transform-origin:0 50%;left:182px;top:666.05px">12/08/2017</div><div class="td" id="c1_2" style="display:inline-block;transform:scaleX(0.928);transform-origin:0 50%;left:269px;top:666.05px">05/16/2018</div><div class="td" id="c1_3" style="display:inline-block;transform:scaleX(0.933);transform-origin:0 50%;left:355px;top:666.05px">304 hrs</div><div class="td" id="c1_5" style="display:inline-block;transform:scaleX(1.001);transform-origin:0 50%;left:585px;top:666.05px">0 min</div><div class="td" id="c1_6" style="display:inline-block;transform:scaleX(0.906);transform-origin:0 50%;left:700px;top:666.05px">304 hrs</div>
<div class="a" style="left:1px;top:683.5px;width:1625px;height:26.5px;background:#fff;border-bottom:1px solid #e4e4e4"></div><div class="td lk" id="c2_0" style="display:inline-block;transform:scaleX(0.996);transform-origin:0 50%;left:9px;top:692.55px">Wingtip post-transformation follow...</div><div class="td" id="c2_1" style="display:inline-block;transform:scaleX(0.917);transform-origin:0 50%;left:182px;top:692.55px">02/01/2017</div><div class="td" id="c2_2" style="display:inline-block;transform:scaleX(0.928);transform-origin:0 50%;left:269px;top:692.55px">08/31/2018</div><div class="td" id="c2_3" style="display:inline-block;transform:scaleX(0.933);transform-origin:0 50%;left:355px;top:692.55px">260 hrs</div><div class="td" id="c2_5" style="display:inline-block;transform:scaleX(1.001);transform-origin:0 50%;left:585px;top:692.55px">0 min</div><div class="td" id="c2_6" style="display:inline-block;transform:scaleX(0.906);transform-origin:0 50%;left:700px;top:692.55px">260 hrs</div>
<div class="a" style="left:1px;top:710px;width:1625px;height:26px;background:#f6f6f6;border-bottom:1px solid #e4e4e4"></div><div class="td lk" id="c3_0" style="display:inline-block;transform:scaleX(0.972);transform-origin:0 50%;left:9px;top:718.8px">Adventure Installation - Operations...</div><div class="td" id="c3_1" style="display:inline-block;transform:scaleX(0.917);transform-origin:0 50%;left:182px;top:718.8px">03/01/2017</div><div class="td" id="c3_2" style="display:inline-block;transform:scaleX(0.928);transform-origin:0 50%;left:269px;top:718.8px">03/30/2017</div><div class="td" id="c3_3" style="display:inline-block;transform:scaleX(0.933);transform-origin:0 50%;left:355px;top:718.8px">152 hrs</div><div class="td" id="c3_4" style="display:inline-block;transform:scaleX(1.001);transform-origin:0 50%;left:470px;top:718.8px">0 min</div><div class="td" id="c3_5" style="display:inline-block;transform:scaleX(1.001);transform-origin:0 50%;left:585px;top:718.8px">0 min</div><div class="td" id="c3_6" style="display:inline-block;transform:scaleX(0.906);transform-origin:0 50%;left:700px;top:718.8px">152 hrs</div>
<svg style="left:750px;top:755px" width="8" height="12"><path d="M6.500 1L2 6l4.500 5" stroke="#666" stroke-width="2" fill="none"/></svg><div class="t" id="rec" style="display:inline-block;transform:scaleX(0.91);transform-origin:0 50%;left:772px;top:756.2px;font-size:10px;color:#555">Record 1 - 50 of 135</div><svg style="left:869px;top:755px" width="8" height="12"><path d="M1.500 1L6 6l-4.500 5" stroke="#111" stroke-width="2.200" fill="none"/></svg>
<div class="a" style="left:1349px;top:87px;width:280px;height:650px;background:#f0f0f0;box-shadow:0 0 3px rgba(0,0,0,.35)"></div>
<div class="sec" style="top:88px;height:61px"></div><div class="sec" style="top:149px;height:79px"></div><div class="sec" style="top:228px;height:52px"></div><div class="sec" style="top:280px;height:53px"></div><div class="sec" style="top:333px;height:52px"></div><div class="sec" style="top:385px;height:79px"></div><div class="sec" style="top:464px;height:52px"></div><div class="sec" style="top:516px;height:134px"></div><div class="sec" style="top:650px;height:52px"></div>
<div class="st" style="top:98px"><span id="s0" style="display:inline-block;transform:scaleX(1.019);transform-origin:50% 50%">Time Zone</span></div><div class="a" style="left:1357px;top:112px;width:250px;height:28px;background:#fff;border:1px solid #ececec"></div><div class="t" id="tz" style="display:inline-block;transform:scaleX(0.948);transform-origin:0 50%;left:1366px;top:121.9px;font-size:9.8px;color:#555">(GMT-08:00) Pacific Time (US &amp; Canada)</div><div class="a" style="left:1588px;top:124px;border:4px solid transparent;border-top:5px solid #111;border-bottom:0"></div>
<div class="st" style="top:158px"><span id="s1" style="display:inline-block;transform:scaleX(1.034);transform-origin:50% 50%">Working Time</span></div><div class="sl" id="w0" style="display:inline-block;transform:scaleX(0.881);transform-origin:0 50%;left:1361px;top:178.9px">Start Time: 12 AM</div><div class="tr" style="left:1442px;width:127px;top:182px"></div><div class="tb" style="left:1470px;top:177.5px"></div><div class="sl" id="w0r" style="display:inline-block;transform:scaleX(0.864);transform-origin:0 50%;left:1576px;top:178.9px">12 AM</div><div class="sl" id="w1" style="display:inline-block;transform:scaleX(0.871);transform-origin:0 50%;left:1361px;top:205.9px">End Time: 12 AM</div><div class="tr" style="left:1442px;width:127px;top:209px"></div><div class="tb" style="left:1533px;top:204.5px"></div><div class="sl" id="w1r" style="display:inline-block;transform:scaleX(0.864);transform-origin:0 50%;left:1576px;top:205.9px">12 AM</div>
<div class="st" style="top:237.5px"><span id="s2" style="display:inline-block;transform:scaleX(1.006);transform-origin:50% 50%">Time Resolution</span></div><div class="sl" id="r0" style="display:inline-block;transform:scaleX(0.855);transform-origin:0 50%;left:1361px;top:257.9px">1 min</div><div class="tr" style="left:1385px;width:171px;top:261px"></div><div class="tb" style="left:1423px;top:256.5px"></div><div class="sl" id="r0r" style="display:inline-block;transform:scaleX(0.905);transform-origin:0 50%;left:1563px;top:257.9px">60 min</div>
<div class="st" style="top:290px"><span id="s3" style="display:inline-block;transform:scaleX(0.954);transform-origin:50% 50%">Resources Per Page</span></div><div class="sl" id="p0" style="display:inline-block;transform:scaleX(0.78);transform-origin:0 50%;left:1361px;top:310.9px">10</div><div class="tr" style="left:1374px;width:203px;top:314px"></div><div class="tb" style="left:1416px;top:309.5px"></div><div class="sl" id="p0r" style="display:inline-block;transform:scaleX(0.837);transform-origin:0 50%;left:1584px;top:310.9px">100</div>
<div class="st" style="top:342px"><span id="s4" style="display:inline-block;transform:scaleX(1.06);transform-origin:50% 50%">Number of months per page</span></div><div class="sl" id="n0" style="display:inline-block;transform:scaleX(0.789);transform-origin:0 50%;left:1361px;top:362.9px">4</div><div class="tr" style="left:1371px;width:210px;top:366px"></div><div class="tb" style="left:1565px;top:361.5px"></div><div class="sl" id="n0r" style="display:inline-block;transform:scaleX(0.798);transform-origin:0 50%;left:1589px;top:362.9px">12</div>
<div class="st" style="top:394px"><span id="s5" style="display:inline-block;transform:scaleX(0.912);transform-origin:50% 50%">Sizes</span></div><div class="sl" id="z0" style="display:inline-block;transform:scaleX(0.87);transform-origin:0 50%;left:1361px;top:414.9px">Row Height: 50</div><div class="tr" style="left:1442px;width:135px;top:418px"></div><div class="tb" style="left:1442px;top:413.5px"></div><div class="sl" id="z0r" style="display:inline-block;transform:scaleX(0.899);transform-origin:0 50%;left:1584px;top:414.9px">600</div><div class="sl" id="z1" style="display:inline-block;transform:scaleX(0.899);transform-origin:0 50%;left:1361px;top:441.9px">Column Width: 70</div><div class="tr" style="left:1442px;width:135px;top:445px"></div><div class="tb" style="left:1451px;top:440.5px"></div><div class="sl" id="z1r" style="left:1584px;top:441.9px">600</div>
<div class="st" style="top:473.5px"><span id="s6" style="display:inline-block;transform:scaleX(1.007);transform-origin:50% 50%">Travel Duration Settings</span></div><div class="sl" id="t0" style="display:inline-block;transform:scaleX(0.864);transform-origin:0 50%;left:1361px;top:493.9px">Show Travel Duration:</div><div class="cb" style="top:496px"></div>
<div class="st" style="top:526px"><span id="s7" style="display:inline-block;transform:scaleX(1.011);transform-origin:50% 50%">View Settings</span></div><div class="sl" id="v0" style="display:inline-block;transform:scaleX(0.885);transform-origin:0 50%;left:1361px;top:546.9px">Hide Entity Color:</div><div class="cb" style="top:548px"></div><div class="sl" id="v1" style="display:inline-block;transform:scaleX(0.869);transform-origin:0 50%;left:1361px;top:573.9px">Hide Canceled:</div><div class="cb" style="top:575px;background:#e8e8e8;border-color:#aaa"></div><svg style="left:1469px;top:576px" width="11" height="10"><path d="M1.500 5l3 3 5.500-7" stroke="#888" stroke-width="2" fill="none"/></svg><div class="sl" id="v2" style="display:inline-block;transform:scaleX(0.887);transform-origin:0 50%;left:1361px;top:600.9px">Hide Legend:</div><div class="cb" style="top:602px"></div><div class="sl" id="v3" style="display:inline-block;transform:scaleX(0.87);transform-origin:0 50%;left:1361px;top:627.9px">Show Booked Percentage:</div><div class="cb" style="top:629px"></div>
<div class="st" style="top:659px"><span id="s8" style="display:inline-block;transform:scaleX(1.014);transform-origin:50% 50%">Booking Requirements Settings</span></div><div class="sl" id="b0" style="display:inline-block;transform:scaleX(0.901);transform-origin:0 50%;left:1361px;top:679.9px">Apply Territory Filter:</div><div class="cb" style="top:681px"></div>
<div class="a" style="left:1437px;top:705px;width:103px;height:27px;background:#cfcfcf"></div><div class="t" id="ots" style="display:inline-block;transform:scaleX(0.995);transform-origin:0 50%;left:1447.300px;top:713.6px;font-size:10px;color:#333">Open Tab Settings</div>
<svg style="left:1220px;top:588px;filter:drop-shadow(1px 1.5px 1.2px rgba(0,0,0,.35))" width="140" height="32"><path d="M7 9.500L108 12.200V4L133 16.600 108 28v-7.500L7 16.600A3.550 3.550 0 0 1 7 9.500z" fill="#e8483f"/></svg>
</body></html>
